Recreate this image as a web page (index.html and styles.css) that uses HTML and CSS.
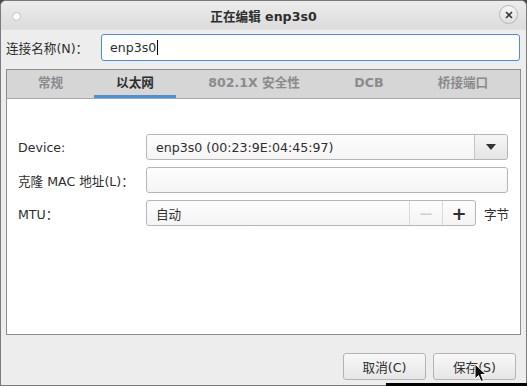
FILE: index.html
```html
<!DOCTYPE html>
<html lang="zh-CN">
<head>
    <meta charset="UTF-8">
    <title>正在编辑 enp3s0</title>
    <link rel="stylesheet" href="styles.css">
</head>
<body>
    <div class="window">
        <div class="titlebar">
            <span class="dot"></span>
            <span class="title">正在编辑 enp3s0</span>
            <span class="close">
                <svg width="10" height="10" viewBox="0 0 10 10"><path d="M2 2 L8 8 M8 2 L2 8" stroke="#3a3a3a" stroke-width="1.6"/></svg>
            </span>
        </div>

        <div class="body">
            <div class="name-row">
                <label class="name-label">连接名称(N)：</label>
                <div class="name-input">enp3s0<span class="caret"></span></div>
            </div>

            <div class="notebook">
                <div class="tabs">
                    <div class="tab t1">常规</div>
                    <div class="tab t2 active">以太网</div>
                    <div class="tab t3">802.1X 安全性</div>
                    <div class="tab t4">DCB</div>
                    <div class="tab t5">桥接端口</div>
                </div>
                <div class="page">
                    <div class="row">
                        <span class="label">Device:</span>
                        <div class="combo">
                            <span class="combo-text">enp3s0 (00:23:9E:04:45:97)</span>
                            <span class="combo-btn">
                                <svg width="10" height="6" viewBox="0 0 10 6"><path d="M0 0 L10 0 L5 6 Z" fill="#333"/></svg>
                            </span>
                        </div>
                    </div>
                    <div class="row">
                        <span class="label">克隆 MAC 地址(L)：</span>
                        <div class="entry"></div>
                    </div>
                    <div class="row">
                        <span class="label">MTU：</span>
                        <div class="spin">
                            <span class="spin-text">自动</span>
                            <span class="spin-btn minus">−</span>
                            <span class="spin-btn plus">+</span>
                        </div>
                        <span class="unit">字节</span>
                    </div>
                </div>
            </div>

            <div class="actions">
                <button class="btn">取消(C)</button>
                <button class="btn">保存(S)</button>
            </div>
        </div>

        <svg class="pointer" width="14" height="20" viewBox="0 0 14 20">
            <path d="M1 1 L1 16 L4.5 12.5 L7 18.5 L9.5 17.5 L7 11.5 L12 11.5 Z" fill="#111" stroke="#fff" stroke-width="1"/>
        </svg>
    </div>
    <div class="taskbar"></div>
</body>
</html>
```

FILE: styles.css
```css
body {
    margin: 0;
    width: 527px;
    height: 386px;
    overflow: hidden;
    position: relative;
    font-family: "DejaVu Sans", "Noto Sans CJK SC", sans-serif;
    font-size: 12.6px;
    color: #2e2e2e;
    background: #4a4a4a;
}

.window {
    position: relative;
    box-sizing: border-box;
    width: 527px;
    height: 386px;
    border: 1px solid #7b7b7b;
    border-radius: 6px 6px 0 0;
    background: #ededed;
    overflow: hidden;
}

.titlebar {
    height: 28px;
    display: flex;
    align-items: center;
    justify-content: center;
    position: relative;
    background: linear-gradient(#ececec, #dcdcdc);
    border-bottom: 1px solid #e2e2e2;
}

.title {
    font-weight: bold;
    font-size: 12.6px;
    color: #2e2e2e;
}

.dot {
    position: absolute;
    left: 11px;
    top: 11px;
    width: 7px;
    height: 7px;
    border-radius: 50%;
    background: #fafafa;
    border: 1px solid #c4c4c4;
}

.close {
    position: absolute;
    right: 8px;
    top: 4px;
    width: 19px;
    height: 19px;
    box-sizing: border-box;
    border-radius: 50%;
    border: 1px solid #b8b8b8;
    background: linear-gradient(#f6f6f6, #e0e0e0);
    display: flex;
    align-items: center;
    justify-content: center;
}

.body {
    padding: 4px 5px 0 5px;
}

.name-row {
    display: flex;
    align-items: center;
    height: 27px;
}

.name-label {
    width: 95px;
    color: #2e2e2e;
}

.name-input {
    flex: 1;
    box-sizing: border-box;
    height: 27px;
    border: 1px solid #4a90d9;
    border-radius: 3px;
    background: #fff;
    padding-left: 8px;
    display: flex;
    align-items: center;
    margin-right: 1px;
}

.caret {
    display: inline-block;
    width: 1px;
    height: 15px;
    background: #000;
    margin-left: 1px;
}

.notebook {
    margin-top: 8px;
    box-sizing: border-box;
    width: 515px;
    height: 266px;
    border: 1px solid #8e8e8e;
    background: #fff;
    display: flex;
    flex-direction: column;
}

.tabs {
    display: flex;
    height: 28px;
    background: #d6d6d6;
    border-bottom: 1px solid #a9a9a9;
}

.tab {
    box-sizing: border-box;
    text-align: center;
    font-weight: bold;
    color: #8b8b8b;
    line-height: 26px;
}

.t1 { width: 87px; }
.t2 { width: 82px; }
.t3 { width: 156px; }
.t4 { width: 74px; }
.t5 { width: 114px; }

.tab.active {
    color: #2e2e2e;
    border-bottom: 3px solid #4a90d9;
}

.page {
    padding: 35px 11px 0 11px;
    display: flex;
    flex-direction: column;
    gap: 7px;
}

.row {
    display: flex;
    align-items: center;
    height: 26px;
}

.label {
    width: 128px;
    flex-shrink: 0;
    color: #2e2e2e;
}

.combo, .entry, .spin {
    box-sizing: border-box;
    flex-shrink: 0;
    height: 26px;
    border: 1px solid #b6b6b6;
    border-radius: 3px;
    background: linear-gradient(#fdfdfd, #f4f4f4);
    display: flex;
    align-items: center;
}

.combo {
    width: 362px;
}

.combo-text {
    flex: 1;
    padding-left: 9px;
}

.combo-btn {
    width: 32px;
    height: 100%;
    border-left: 1px solid #c4c4c4;
    display: flex;
    align-items: center;
    justify-content: center;
    background: linear-gradient(#f6f6f6, #e4e4e4);
    border-radius: 0 3px 3px 0;
}

.entry {
    width: 362px;
}

.spin {
    width: 330px;
}

.spin-text {
    flex: 1;
    padding-left: 9px;
}

.spin-btn {
    width: 32px;
    height: 100%;
    border-left: 1px solid #dadada;
    display: flex;
    align-items: center;
    justify-content: center;
    font-size: 18px;
    font-weight: bold;
}

.minus {
    color: #cfcfcf;
    font-weight: normal;
}

.plus {
    color: #2e2e2e;
}

.unit {
    margin-left: 8px;
    white-space: nowrap;
}

.actions {
    display: flex;
    justify-content: flex-end;
    gap: 7px;
    margin-top: 18px;
    padding-right: 5px;
}

.btn {
    width: 83px;
    height: 27px;
    border: 1px solid #b4b4b4;
    border-radius: 3px;
    background: linear-gradient(#f8f8f8, #e6e6e6);
    font-family: "DejaVu Sans", "Noto Sans CJK SC", sans-serif;
    font-size: 12.6px;
    color: #2e2e2e;
    padding: 0;
}

.pointer {
    position: absolute;
    left: 473px;
    top: 362px;
}

.taskbar {
    position: absolute;
    left: 386px;
    top: 383px;
    width: 141px;
    height: 3px;
    background: #000;
}
```
